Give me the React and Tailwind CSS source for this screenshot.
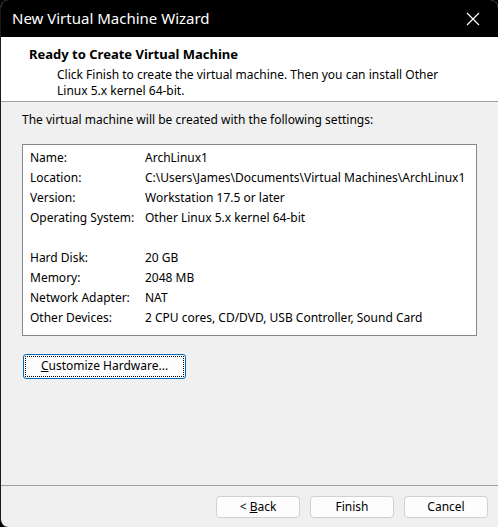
import React from 'react';

const settings = [
  ['Name:', 'ArchLinux1'],
  ['Location:', 'C:\\Users\\James\\Documents\\Virtual Machines\\ArchLinux1'],
  ['Version:', 'Workstation 17.5 or later'],
  ['Operating System:', 'Other Linux 5.x kernel 64-bit'],
  null,
  ['Hard Disk:', '20 GB'],
  ['Memory:', '2048 MB'],
  ['Network Adapter:', 'NAT'],
  ['Other Devices:', '2 CPU cores, CD/DVD, USB Controller, Sound Card'],
];

const WizardButton = ({ children }) => (
  <button className="w-[84px] h-[22px] bg-[#fdfdfd] border border-[#d0d0d0] rounded-[4px] text-[12px] text-black">
    {children}
  </button>
);

const App = () => {
  return (
    <div
      className="w-[498px] h-[527px] bg-black overflow-hidden"
      style={{ fontFamily: '"Noto Sans", "Liberation Sans", sans-serif' }}
    >
      <div className="h-full flex flex-col bg-[#f0f0f0] rounded-t-[8px] rounded-bl-[8px] border-l border-[#1a1a1a] overflow-hidden">
        {/* title bar */}
        <div className="h-[37px] bg-black flex items-center justify-between pl-[11px] pr-[18px] shrink-0">
          <span className="text-white text-[15px]">New Virtual Machine Wizard</span>
          <svg width="14" height="14" viewBox="0 0 14 14">
            <path d="M1 1 L13 13 M13 1 L1 13" stroke="#fff" strokeWidth="1.2" />
          </svg>
        </div>

        {/* header */}
        <div className="h-[65px] bg-white border-b border-[#a0a0a0] pl-[28px] pt-[7px] shrink-0">
          <div className="text-[13px] font-bold text-black leading-[20px]">Ready to Create Virtual Machine</div>
          <div className="mt-[3px] pl-[28px] text-[12px] text-black leading-[16px] pr-[40px]">
            Click Finish to create the virtual machine. Then you can install Other Linux 5.x kernel 64-bit.
          </div>
        </div>

        {/* body */}
        <div className="flex-1 flex flex-col px-[21px]">
          <p className="text-[12px] text-black mt-[10px] leading-[16px]">
            The virtual machine will be created with the following settings:
          </p>
          <div className="mt-[16px] h-[192px] bg-white border border-[#828790] pt-[3px] pl-[7px]">
            {settings.map((row, i) =>
              row ? (
                <div key={i} className="flex h-[20px] items-center text-[12px] text-black">
                  <span className="w-[115px] shrink-0">{row[0]}</span>
                  <span>{row[1]}</span>
                </div>
              ) : (
                <div key={i} className="h-[20px]" />
              )
            )}
          </div>
          <div className="mt-[16px] ml-[1px]">
            <button className="w-[163px] h-[25px] bg-[#fdfdfd] border border-[#0067c0] rounded-[3px] text-[12px] text-black outline-1 outline-dotted outline-black -outline-offset-[3px]">
              <span className="underline">C</span>ustomize Hardware...
            </button>
          </div>
        </div>

        {/* footer */}
        <div className="h-[42px] border-t border-[#a0a0a0] flex items-center justify-end gap-[10px] pr-[10px] shrink-0">
          <WizardButton>
            &lt; <span className="underline">B</span>ack
          </WizardButton>
          <WizardButton>Finish</WizardButton>
          <WizardButton>Cancel</WizardButton>
        </div>
      </div>
    </div>
  );
};

export default App;
